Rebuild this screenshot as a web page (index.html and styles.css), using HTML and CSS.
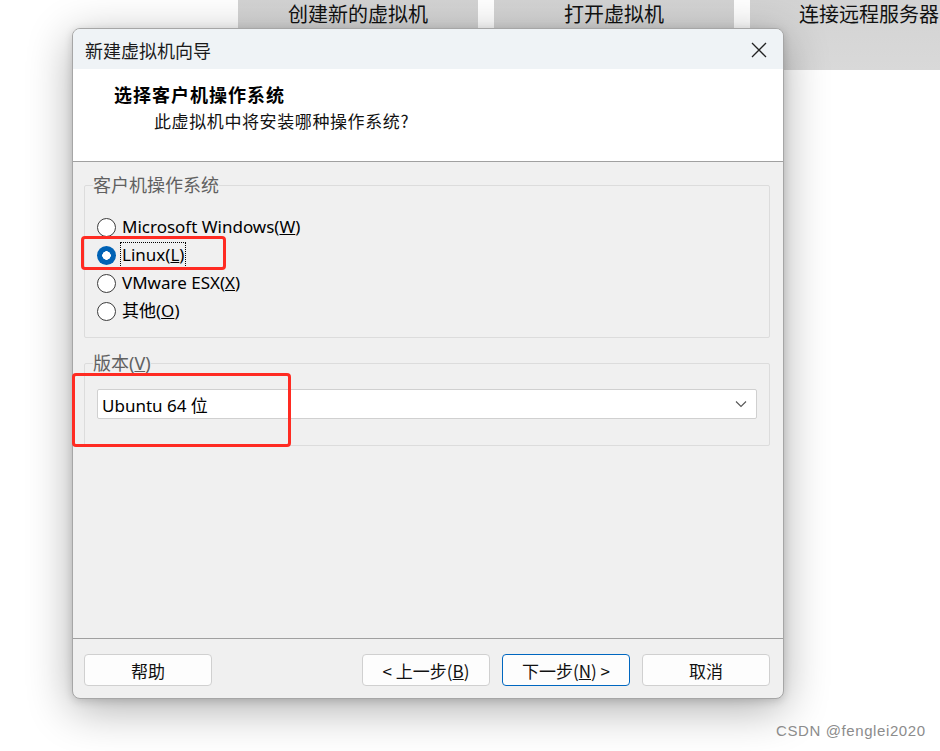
FILE: index.html
```html
<!DOCTYPE html>
<html lang="zh-CN">
<head>
<meta charset="utf-8">
<title>新建虚拟机向导</title>
<link rel="stylesheet" href="styles.css">
</head>
<body>
<div class="toolbar">
  <div class="tb-btn">创建新的虚拟机</div>
  <div class="tb-btn">打开虚拟机</div>
  <div class="tb-btn tb-last">连接远程服务器</div>
</div>

<div class="dialog">
  <div class="titlebar">
    <span class="title">新建虚拟机向导</span>
    <svg class="close" width="16" height="16" viewBox="0 0 16 16"><path d="M1 1 L15 15 M15 1 L1 15" stroke="#222" stroke-width="1.3" fill="none"/></svg>
  </div>
  <div class="header">
    <div class="h-title">选择客户机操作系统</div>
    <div class="h-sub">此虚拟机中将安装哪种操作系统?</div>
  </div>
  <div class="body">
    <fieldset class="group g1">
      <legend>客户机操作系统</legend>
      <div class="radios">
        <div class="radio"><span class="dot"></span><span class="lbl">Microsoft Windows(<u>W</u>)</span></div>
        <div class="radio checked"><span class="dot"></span><span class="lbl focus">Linux(<u>L</u>)</span></div>
        <div class="radio"><span class="dot"></span><span class="lbl">VMware ESX(<u>X</u>)</span></div>
        <div class="radio"><span class="dot"></span><span class="lbl">其他(<u>O</u>)</span></div>
      </div>
    </fieldset>
    <fieldset class="group g2">
      <legend>版本(<u>V</u>)</legend>
      <div class="select">
        <span>Ubuntu 64 位</span>
        <svg width="12" height="8" viewBox="0 0 12 8"><path d="M1 1.5 L6 6.5 L11 1.5" stroke="#555" stroke-width="1.1" fill="none"/></svg>
      </div>
    </fieldset>
  </div>
  <div class="footer">
    <div class="btn">帮助</div>
    <div class="btn-group">
      <div class="btn">&lt; 上一步(<u>B</u>)</div>
      <div class="btn primary">下一步(<u>N</u>) &gt;</div>
      <div class="btn">取消</div>
    </div>
  </div>
</div>

<div class="mark mark1"></div>
<div class="mark mark2"></div>

<div class="watermark">CSDN @fenglei2020</div>
</body>
</html>
```

FILE: styles.css
```css
html, body {
  margin: 0;
  padding: 0;
}
body {
  width: 940px;
  height: 751px;
  overflow: hidden;
  background: #ffffff;
  position: relative;
  font-family: "Noto Sans", "Noto Sans CJK SC", sans-serif;
  color: #000;
}
.toolbar {
  display: flex;
  gap: 16px;
  padding-left: 238px;
}
.tb-btn {
  width: 240px;
  height: 70px;
  flex: none;
  box-sizing: border-box;
  background: linear-gradient(to bottom, #d3d3d3, #d9d9d9);
  text-align: center;
  font-family: "Noto Sans CJK SC", sans-serif;
  font-size: 20px;
  line-height: 28px;
  color: #111;
  white-space: nowrap;
}
.tb-btn.tb-last {
  width: auto;
  flex: 1;
  text-align: left;
  padding-left: 49px;
}
.dialog {
  position: absolute;
  left: 72px;
  top: 28px;
  width: 710px;
  height: 669px;
  border: 1px solid #a6a6a6;
  border-radius: 8px;
  background: #f0f0f0;
  box-shadow: 0 10px 45px rgba(0,0,0,0.32), 0 2px 8px rgba(0,0,0,0.15);
  display: flex;
  flex-direction: column;
  overflow: hidden;
}
.titlebar {
  height: 40px;
  flex: none;
  background: #eff3f6;
  display: flex;
  align-items: center;
  justify-content: space-between;
  padding: 0 16px 0 12px;
}
.title {
  font-family: "Noto Sans CJK SC", sans-serif;
  font-size: 18px;
  color: #1a1a1a;
  padding-top: 1px;
}
.close {
  display: block;
  margin-top: 2px;
}
.header {
  flex: none;
  background: #fff;
  border-bottom: 1px solid #a0a0a0;
  box-sizing: border-box;
  height: 93px;
  padding: 12px 0 0 41px;
  font-family: "Noto Sans CJK SC", sans-serif;
}
.h-title {
  font-size: 18px;
  font-weight: bold;
  line-height: 26px;
  letter-spacing: 1px;
}
.h-sub {
  font-size: 17px;
  line-height: 24px;
  margin-top: 2px;
  padding-left: 40px;
  color: #111;
  letter-spacing: 0.6px;
}
.body {
  flex: 1;
  padding: 11px 13px 0 11px;
  display: flex;
  flex-direction: column;
  gap: 13px;
}
.group {
  margin: 0;
  border: 1px solid #dcdcdc;
  border-radius: 2px;
  padding: 0;
  min-width: 0;
}
.group legend {
  font-family: "Noto Sans", "Noto Sans CJK SC", sans-serif;
  font-size: 18px;
  line-height: 24px;
  color: #616161;
  padding: 0;
  margin-left: 8px;
}
.g1 {
  height: 165px;
  box-sizing: border-box;
}
.radios {
  padding: 16px 0 0 12px;
  display: flex;
  flex-direction: column;
}
.radio {
  height: 28px;
  display: flex;
  align-items: center;
  gap: 6px;
  font-size: 17px;
}
.dot {
  width: 17px;
  height: 17px;
  border: 1px solid #3c3c3c;
  border-radius: 50%;
  background: #fff;
  flex: none;
  box-sizing: content-box;
}
.checked .dot {
  width: 19px;
  height: 19px;
  border: none;
  background: radial-gradient(circle, #fff 0 4px, #0062b5 4.5px);
}
.lbl {
  line-height: 22px;
  padding: 1px 1px;
  border: 1px solid transparent;
  margin-left: -2px;
}
.lbl.focus {
  border: 1px dotted #000;
}
.g2 {
  height: 95px;
  box-sizing: border-box;
  padding: 14px 12px 0 12px;
}
.g2 legend {
  margin-left: -4px;
}
.select {
  height: 30px;
  box-sizing: border-box;
  background: #fff;
  border: 1px solid #d0d0d0;
  border-radius: 2px;
  display: flex;
  align-items: center;
  justify-content: space-between;
  padding: 0 9px 0 4px;
  font-size: 17px;
}
.footer {
  height: 60px;
  flex: none;
  box-sizing: border-box;
  border-top: 1px solid #a0a0a0;
  display: flex;
  justify-content: space-between;
  align-items: flex-start;
  padding: 15px 13px 0 11px;
}
.btn-group {
  display: flex;
  gap: 12px;
}
.btn {
  width: 128px;
  height: 32px;
  box-sizing: border-box;
  background: #fdfdfd;
  border: 1px solid #d0d0d0;
  border-radius: 4px;
  display: flex;
  align-items: center;
  justify-content: center;
  font-family: "Noto Sans CJK SC", sans-serif;
  font-size: 17px;
  color: #111;
}
.btn.primary {
  border-color: #0067c0;
}
.mark {
  position: absolute;
  border: 3px solid #ff2b22;
  border-radius: 4px;
  box-sizing: border-box;
}
.mark1 {
  left: 81px;
  top: 236px;
  width: 145px;
  height: 34px;
}
.mark2 {
  left: 72px;
  top: 373px;
  width: 219px;
  height: 74px;
}
.watermark {
  position: absolute;
  left: 776px;
  top: 722px;
  font-family: "Liberation Sans", sans-serif;
  font-size: 15px;
  color: #8c8c8c;
  letter-spacing: 0.6px;
}
```
